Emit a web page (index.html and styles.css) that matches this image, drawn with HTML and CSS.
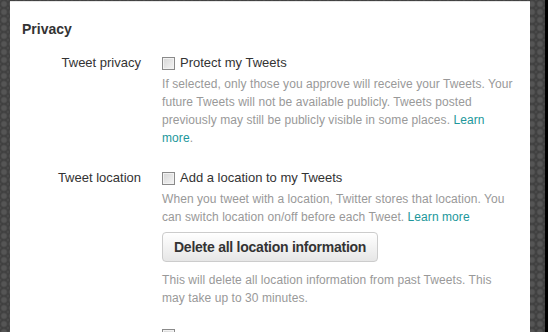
FILE: index.html
```html
<!DOCTYPE html>
<html lang="en">
<head>
    <meta charset="UTF-8">
    <title>Settings - Privacy</title>
    <link rel="stylesheet" href="styles.css">
</head>
<body>

    <div class="panel">
        <h2 class="section-title">Privacy</h2>

        <div class="setting">
            <div class="setting-label">Tweet privacy</div>
            <div class="setting-control">
                <label class="check">
                    <input type="checkbox">
                    <span>Protect my Tweets</span>
                </label>
                <p class="help">If selected, only those you approve will receive your Tweets. Your future Tweets will not be available publicly. Tweets posted previously may still be publicly visible in some places. <a href="#">Learn more</a>.</p>
            </div>
        </div>

        <div class="setting">
            <div class="setting-label">Tweet location</div>
            <div class="setting-control">
                <label class="check">
                    <input type="checkbox">
                    <span>Add a location to my Tweets</span>
                </label>
                <p class="help">When you tweet with a location, Twitter stores that location. You can switch location on/off before each Tweet. <a href="#">Learn more</a></p>
                <button class="btn">Delete all location information</button>
                <p class="help help-after">This will delete all location information from past Tweets. This may take up to 30 minutes.</p>
            </div>
        </div>

        <div class="setting">
            <div class="setting-label"></div>
            <div class="setting-control">
                <label class="check">
                    <input type="checkbox">
                </label>
            </div>
        </div>
    </div>

</body>
</html>
```

FILE: styles.css
```css
body {
    margin: 0;
    padding: 1px 0 0 10px;
    height: 331px;
    overflow: hidden;
    font-family: "Liberation Sans", Arial, sans-serif;
    color: #333;
    background-color: #484848;
    background-image:
        linear-gradient(to right, transparent 545px, #000 545px),
        radial-gradient(circle at 50% 50%, #555 2px, #3e3e3e 4px, #4a4a4a 5px);
    background-size: 100% 100%, 8px 8px;
}
.panel {
    width: 508px;
    height: 331px;
    overflow: hidden;
    padding: 0 0 0 12px;
    background: #fff;
    border-top: 1px solid #e6e6e6;
}
.section-title {
    margin: 0;
    padding-top: 18px;
    font-size: 14px;
    line-height: 18px;
    font-weight: bold;
    color: #333;
}
.setting {
    display: grid;
    grid-template-columns: 119px 1fr;
    column-gap: 21px;
    margin-top: 16px;
}
.setting + .setting {
    margin-top: 22px;
}
.setting-label {
    text-align: right;
    font-size: 13px;
    line-height: 18px;
}
.setting-control {
    width: 351px;
}
.check {
    display: flex;
    align-items: center;
    gap: 5px;
    font-size: 13px;
    line-height: 18px;
}
.check input {
    appearance: none;
    -webkit-appearance: none;
    margin: 0;
    width: 13px;
    height: 13px;
    border: 1px solid #8a8a8a;
    background: linear-gradient(135deg, #d6d6d6, #f4f4f4);
    box-shadow: inset 0 0 0 1px #f2f2f2;
}
.help {
    margin: 3px 0 0;
    font-size: 12px;
    line-height: 18px;
    letter-spacing: 0.07px;
    color: #999;
}
.help a {
    color: #21979b;
    text-decoration: none;
}
.help-after {
    margin-top: 9px;
}
.btn {
    display: block;
    margin-top: 6px;
    height: 30px;
    padding: 0 11px;
    font-family: "Liberation Sans", Arial, sans-serif;
    font-size: 14px;
    font-weight: bold;
    letter-spacing: -0.25px;
    color: #333;
    border: 1px solid #ccc;
    border-radius: 4px;
    background: linear-gradient(#fff, #e6e6e6);
    box-shadow: 0 1px 0 rgba(255, 255, 255, 0.5) inset;
}
```
